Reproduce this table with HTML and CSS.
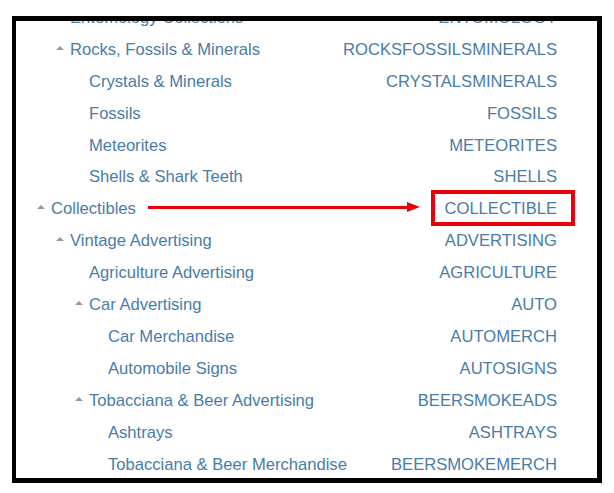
FILE: index.html
```html
<!DOCTYPE html>
<html>
<head>
<meta charset="utf-8">
<link rel="stylesheet" href="styles.css">
</head>
<body>
<div class="frame">
  <ul class="tree">
    <li class="row l1"><span class="name"><span class="caret"></span>Entomology Collections</span><span class="code">ENTOMOLOGY</span></li>
    <li class="row l1"><span class="name"><span class="caret up"></span>Rocks, Fossils &amp; Minerals</span><span class="code">ROCKSFOSSILSMINERALS</span></li>
    <li class="row l2"><span class="name"><span class="caret"></span>Crystals &amp; Minerals</span><span class="code">CRYSTALSMINERALS</span></li>
    <li class="row l2"><span class="name"><span class="caret"></span>Fossils</span><span class="code">FOSSILS</span></li>
    <li class="row l2"><span class="name"><span class="caret"></span>Meteorites</span><span class="code">METEORITES</span></li>
    <li class="row l2"><span class="name"><span class="caret"></span>Shells &amp; Shark Teeth</span><span class="code">SHELLS</span></li>
    <li class="row l0"><span class="name"><span class="caret up"></span>Collectibles</span><span class="code">COLLECTIBLE</span></li>
    <li class="row l1"><span class="name"><span class="caret up"></span>Vintage Advertising</span><span class="code">ADVERTISING</span></li>
    <li class="row l2"><span class="name"><span class="caret"></span>Agriculture Advertising</span><span class="code">AGRICULTURE</span></li>
    <li class="row l2"><span class="name"><span class="caret up"></span>Car Advertising</span><span class="code">AUTO</span></li>
    <li class="row l3"><span class="name"><span class="caret"></span>Car Merchandise</span><span class="code">AUTOMERCH</span></li>
    <li class="row l3"><span class="name"><span class="caret"></span>Automobile Signs</span><span class="code">AUTOSIGNS</span></li>
    <li class="row l2"><span class="name"><span class="caret up"></span>Tobacciana &amp; Beer Advertising</span><span class="code">BEERSMOKEADS</span></li>
    <li class="row l3"><span class="name"><span class="caret"></span>Ashtrays</span><span class="code">ASHTRAYS</span></li>
    <li class="row l3"><span class="name"><span class="caret"></span>Tobacciana &amp; Beer Merchandise</span><span class="code">BEERSMOKEMERCH</span></li>
  </ul>
</div>
<div class="arrow"><span class="shaft"></span><span class="head"></span></div>
<div class="highlight"></div>
</body>
</html>
```

FILE: styles.css
```css
html, body {
  margin: 0;
  padding: 0;
  background: #ffffff;
}
body {
  position: relative;
  width: 614px;
  height: 493px;
  overflow: hidden;
  font-family: "Liberation Sans", Arial, sans-serif;
  font-size: 16.6px;
  color: #4a7ca8;
}
.frame {
  margin: 16px 0 0 12px;
  width: 590px;
  height: 467px;
  box-sizing: border-box;
  border-style: solid;
  border-color: #000;
  border-width: 5px 5px 5px 4px;
  overflow: hidden;
}
.tree {
  list-style: none;
  margin: -19px 0 0 0;
  padding: 0;
}
.row {
  display: flex;
  justify-content: space-between;
  align-items: center;
  height: 31.92px;
  padding-right: 40px;
  white-space: nowrap;
}
.name {
  display: flex;
  align-items: center;
}
.l0 .name { padding-left: 21px; }
.l1 .name { padding-left: 40px; }
.l2 .name { padding-left: 59px; }
.l3 .name { padding-left: 78px; }
.caret {
  display: inline-block;
  width: 14px;
  height: 8px;
  position: relative;
}
.caret.up::before {
  content: "";
  position: absolute;
  left: 0;
  top: 0;
  border-left: 4px solid transparent;
  border-right: 4px solid transparent;
  border-bottom: 4px solid #9a9a9a;
}
.arrow {
  position: absolute;
  left: 148px;
  top: 202px;
  width: 272px;
  height: 10px;
  display: flex;
  align-items: center;
}
.shaft {
  flex: 1;
  height: 3px;
  background: #e8000b;
}
.head {
  width: 0;
  height: 0;
  border-top: 5px solid transparent;
  border-bottom: 5px solid transparent;
  border-left: 13px solid #e8000b;
}
.highlight {
  position: absolute;
  left: 431px;
  top: 190px;
  width: 144px;
  height: 36px;
  box-sizing: border-box;
  border: 4px solid #e8000b;
}
```
